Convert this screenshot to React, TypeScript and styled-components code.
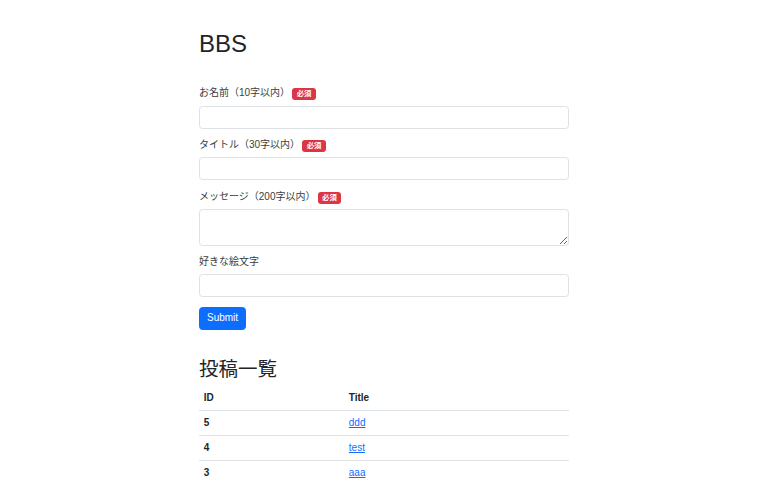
import React from "react";
import styled, { createGlobalStyle } from "styled-components";

const GlobalStyle = createGlobalStyle`
  html, body {
    margin: 0;
    padding: 0;
    background: #ffffff;
  }
  body {
    font-family: "Liberation Sans", "Noto Sans CJK JP", sans-serif;
    font-size: 10px;
    line-height: 14.4px;
    color: #212529;
  }
  * { box-sizing: border-box; }
`;

const Container = styled.div`
  width: 370px;
  margin: 0 auto;
  padding-top: 29.5px;
`;

const Title = styled.h1`
  margin: 0 0 28px;
  font-size: 24px;
  line-height: 28.8px;
  font-weight: 400;
`;

const SectionTitle = styled.h2`
  margin: 28.5px 0 4.8px;
  font-size: 19.5px;
  line-height: 23px;
  font-weight: 400;
`;

const Field = styled.div`
  margin-bottom: 9.6px;
`;

const Label = styled.label`
  display: block;
  margin-bottom: 4.8px;
  font-size: 10px;
  line-height: 14.4px;
  color: #3a3d40;
`;

const Badge = styled.span`
  display: inline-block;
  margin-left: 2px;
  padding: 2.4px 4.6px;
  background: #dc3545;
  color: #ffffff;
  font-size: 7.4px;
  line-height: 1;
  font-weight: 700;
  border-radius: 3px;
  vertical-align: baseline;
`;

const Input = styled.input`
  display: block;
  width: 100%;
  height: 23px;
  padding: 3.6px 7.2px;
  font: inherit;
  color: #212529;
  background: #ffffff;
  border: 1px solid #dee2e6;
  border-radius: 3.6px;
  outline: none;
`;

const TextArea = styled.textarea<{ $height: number }>`
  display: block;
  width: 100%;
  height: ${(p) => p.$height}px;
  padding: 3.6px 7.2px;
  font: inherit;
  color: #212529;
  background: #ffffff;
  border: 1px solid #dee2e6;
  border-radius: 3.6px;
  outline: none;
  resize: vertical;
`;

const Button = styled.button`
  display: inline-block;
  height: 22.8px;
  padding: 0 7px;
  font: inherit;
  font-size: 10px;
  color: #ffffff;
  background: #0d6efd;
  border: 1px solid #0d6efd;
  border-radius: 3.6px;
  cursor: pointer;
`;

const Table = styled.table`
  width: 100%;
  border-collapse: collapse;
`;

const Cell = styled.td<{ $head?: boolean; $width?: number }>`
  padding: 4.8px;
  text-align: left;
  font-weight: ${(p) => (p.$head ? 700 : 400)};
  border-bottom: 1px solid #dee2e6;
  font-size: 10px;
  line-height: 14.4px;
  ${(p) => (p.$width ? `width: ${p.$width}px;` : "")}
`;

const PostLink = styled.a`
  color: #0d6efd;
  text-decoration: underline;
`;

const fields = [
  { label: "お名前（10字以内）", required: true, kind: "input" },
  { label: "タイトル（30字以内）", required: true, kind: "input" },
  { label: "メッセージ（200字以内）", required: true, kind: "textarea" },
  { label: "好きな絵文字", required: false, kind: "input" },
];

const posts = [
  { id: 5, title: "ddd" },
  { id: 4, title: "test" },
  { id: 3, title: "aaa" },
];

export default function App() {
  return (
    <>
      <GlobalStyle />
      <Container>
        <Title>BBS</Title>
        <form onSubmit={(e) => e.preventDefault()}>
          {fields.map((f, i) => (
            <Field key={i}>
              <Label>
                {f.label}
                {f.required && <Badge>必須</Badge>}
              </Label>
              {f.kind === "textarea" ? <TextArea $height={36.5} rows={2} /> : <Input type="text" />}
            </Field>
          ))}
          <Button type="submit">Submit</Button>
        </form>
        <SectionTitle>投稿一覧</SectionTitle>
        <Table>
          <thead>
            <tr>
              <Cell as="th" $head $width={145}>ID</Cell>
              <Cell as="th" $head>Title</Cell>
            </tr>
          </thead>
          <tbody>
            {posts.map((p) => (
              <tr key={p.id}>
                <Cell as="th" $head>{p.id}</Cell>
                <Cell>
                  <PostLink href="#">{p.title}</PostLink>
                </Cell>
              </tr>
            ))}
          </tbody>
        </Table>
      </Container>
    </>
  );
}
